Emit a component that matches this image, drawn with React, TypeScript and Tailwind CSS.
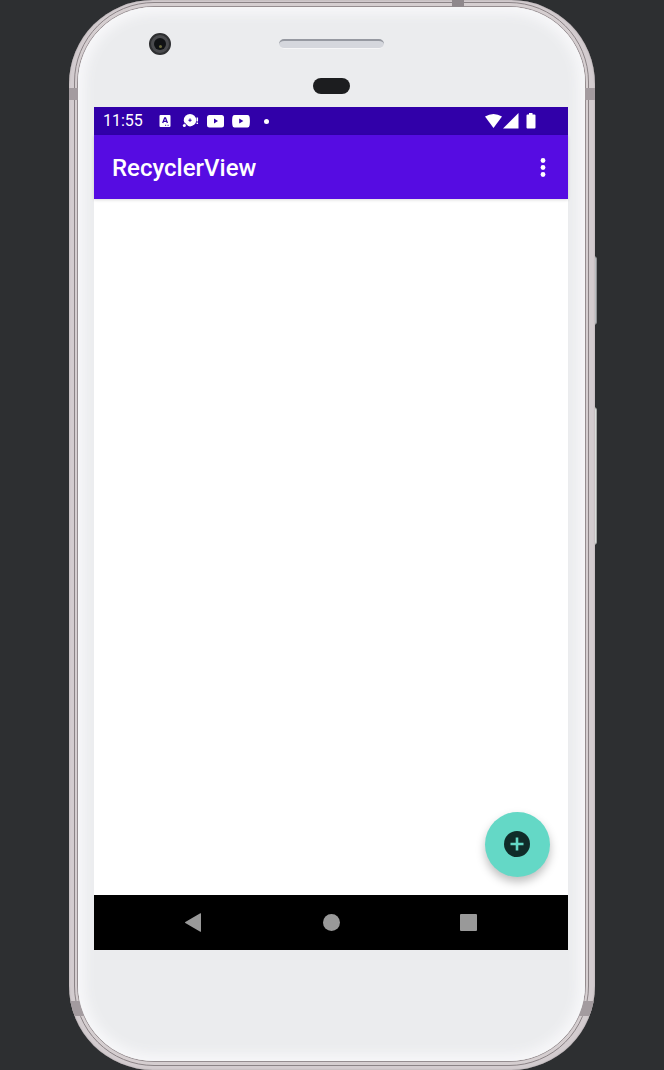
import React from 'react';

function StatusBar() {
  return (
    <div className="flex h-7 items-center bg-[#3100a9] pl-[9px] pr-8 text-white">
      <span className="w-14 text-base leading-7">11:55</span>
      <div className="flex flex-1 items-center">
        <svg className="h-4 w-[23px]" viewBox="0 0 23 16" aria-hidden="true">
          <rect x="0.500" y="2" width="11" height="12" rx="1" fill="#fff" />
          <path d="M3.700 10 5.700 4.800h.8L8.400 10M4.500 8.300h3.200" fill="none" stroke="#3100a9" strokeWidth="1.300" />
          <path d="M6 12.300h1.200M8.500 12.300h1.200" stroke="#3100a9" strokeWidth=".9" />
        </svg>
        <svg className="h-4 w-[25px]" viewBox="0 0 25 16" aria-hidden="true">
          <circle cx="8" cy="7.200" r="6.200" fill="#fff" />
          <path d="M2.300 9.500 5.500 13" stroke="#3100a9" strokeWidth=".9" />
          <circle cx="2.300" cy="12.500" r="1.500" fill="#fff" />
          <path d="M6.400 7.200h3.200M8 5.600v3.200" stroke="#3100a9" strokeWidth="1.100" />
          <path d="M15.300 4.500v4M15.300 9.600v1.500" stroke="#fff" strokeWidth="1.500" />
        </svg>
        <svg className="h-4 w-[25px]" viewBox="0 0 25 16" aria-hidden="true">
          <rect x="0" y="2" width="17" height="12.500" rx="2.500" fill="#fff" />
          <path d="M7 5.500v5L11 8z" fill="#3100a9" />
        </svg>
        <svg className="h-4 w-8" viewBox="0 0 32 16" aria-hidden="true">
          <path d="M2.500 2h13q1.800 0 2.100 2 .6 4 0 8.300-.3 2.200-2.100 2.200h-13q-1.800 0-2.100-2.200-.6-4.300 0-8.300.3-2 2.100-2z" fill="#fff" />
          <path d="M7.200 5.500v5l4.200-2.500z" fill="#3100a9" />
        </svg>
        <span className="size-[5px] rounded-full bg-white" />
      </div>
      <svg className="h-4 w-[52px]" viewBox="0 0 52 16" fill="#fff" aria-label="Wifi, signal and battery">
        <path d="M1 3.600Q9.500-1.600 18 3.600L9.500 15z" />
        <path d="M34.500 0v15.500H19z" />
        <path d="M45 0h3.500v1.500h2q1 0 1 1V14.500q0 1-1 1h-7q-1 0-1-1V2.500q0-1 1-1h1.500z" />
      </svg>
    </div>
  );
}

function AppBar() {
  return (
    <header className="z-10 flex h-16 items-center justify-between bg-[#560ce2] pl-[18px] pr-[13px] pt-[2px] text-white shadow-[0_1px_3px_rgba(0,0,0,0.15)]">
      <h1 className="text-2xl font-medium">RecyclerView</h1>
      <button type="button" aria-label="More options" className="flex h-10 w-6 items-center justify-center">
        <svg className="h-5 w-2" viewBox="0 0 8 20" fill="#fff" aria-hidden="true">
          <circle cx="4" cy="2.500" r="2.400" />
          <circle cx="4" cy="9.500" r="2.400" />
          <circle cx="4" cy="16.500" r="2.400" />
        </svg>
      </button>
    </header>
  );
}

function NavigationBar() {
  const button = 'flex h-full w-[137px] items-center justify-center';
  return (
    <nav className="flex h-[55px] justify-center bg-black">
      <button type="button" aria-label="Back" className={button}>
        <svg className="size-5" viewBox="0 0 20 20" fill="#999" aria-hidden="true">
          <path d="M17 .7v17.600q0 .8-.7.4L1.300 10q-.6-.5 0-1L16.300.3q.7-.4.7.4z" />
        </svg>
      </button>
      <button type="button" aria-label="Home" className={button}>
        <span className="size-[17px] rounded-full bg-[#999]" />
      </button>
      <button type="button" aria-label="Recent apps" className={button}>
        <span className="size-[17px] rounded-[1px] bg-[#999]" />
      </button>
    </nav>
  );
}

function Screen() {
  return (
    <div className="flex flex-1 flex-col bg-white">
      <StatusBar />
      <AppBar />
      <main className="flex flex-1 items-end justify-end p-[18px]">
        <button
          type="button"
          aria-label="Add item"
          className="flex size-[65px] items-center justify-center rounded-full bg-[#64d8c6] shadow-[0_5px_10px_rgba(0,0,0,0.26)]"
        >
          <svg className="size-[27px]" viewBox="0 0 27 27" aria-hidden="true">
            <circle cx="13" cy="13" r="13" fill="#102c29" />
            <path d="M13 6.500v13M6.500 13h13" stroke="#64d8c6" strokeWidth="2.600" />
          </svg>
        </button>
      </main>
      <NavigationBar />
    </div>
  );
}

function Sensors() {
  return (
    <div className="relative h-[100px]">
      <span className="absolute left-[55px] top-[26px] flex size-[22px] items-center justify-center rounded-full border-2 border-[#2e2f31] bg-[#4a4b4e]">
        <span className="flex size-3 items-end justify-center rounded-full bg-[#101214] pb-0.5">
          <span className="size-[3px] rounded-full bg-[#69683a]" />
        </span>
      </span>
      <div className="flex flex-col items-center pt-8">
        <span className="h-[10px] w-[105px] rounded-full border-b border-t-2 border-b-[#f6f6f7] border-t-[#9699a1] bg-[#d5d7dd]" />
        <span className="mt-[29px] h-4 w-[37px] rounded-full bg-[#1c1d1f]" />
      </div>
    </div>
  );
}

export default function App() {
  return (
    <div className="flex min-h-screen flex-col bg-[#2d2f31] font-['Roboto',sans-serif]">
      <div className="relative mx-auto flex w-full max-w-[526px] flex-1 flex-col">
        <span className="absolute -right-[2px] top-[256px] h-[69px] w-2 rounded-[3px] border border-[#8f9093] bg-[#b9bec1]" />
        <span className="absolute -right-[2px] top-[407px] h-[138px] w-2 rounded-[3px] border border-[#a3a5a4] bg-[#d9dedb]" />
        <div className="relative flex flex-1 flex-col overflow-hidden rounded-[84px] bg-[#d3cccf] pb-1 pl-[5px] pr-[6px] pt-[2px] shadow-[inset_0_0_2px_#aaa2a5]">
          <span className="absolute left-0 top-[88px] z-10 h-3 w-3 bg-[#a39b9f]" />
          <span className="absolute right-0 top-[88px] z-10 h-3 w-3 bg-[#a39b9f]" />
          <span className="absolute bottom-[54px] left-0 z-10 h-[15px] w-5 bg-[#a39b9f]" />
          <span className="absolute bottom-[54px] right-0 z-10 h-[15px] w-5 bg-[#a39b9f]" />
          <span className="absolute left-[383px] top-0 z-10 h-3 w-3 bg-[#8f888c]" />
          <div className="flex flex-1 flex-col rounded-[80px] border border-[#8b8386] bg-[#d5ced0] px-[2px] py-[3px]">
            <div className="flex flex-1 flex-col rounded-[77px] border border-[#958d90]">
              <div className="relative z-20 flex flex-1 flex-col rounded-[76px] bg-[#ebecee] pb-[111px] pl-4 pr-[17px] shadow-[inset_0_0_12px_7px_#f7f7f9]">
                <Sensors />
                <Screen />
              </div>
            </div>
          </div>
        </div>
      </div>
    </div>
  );
}
